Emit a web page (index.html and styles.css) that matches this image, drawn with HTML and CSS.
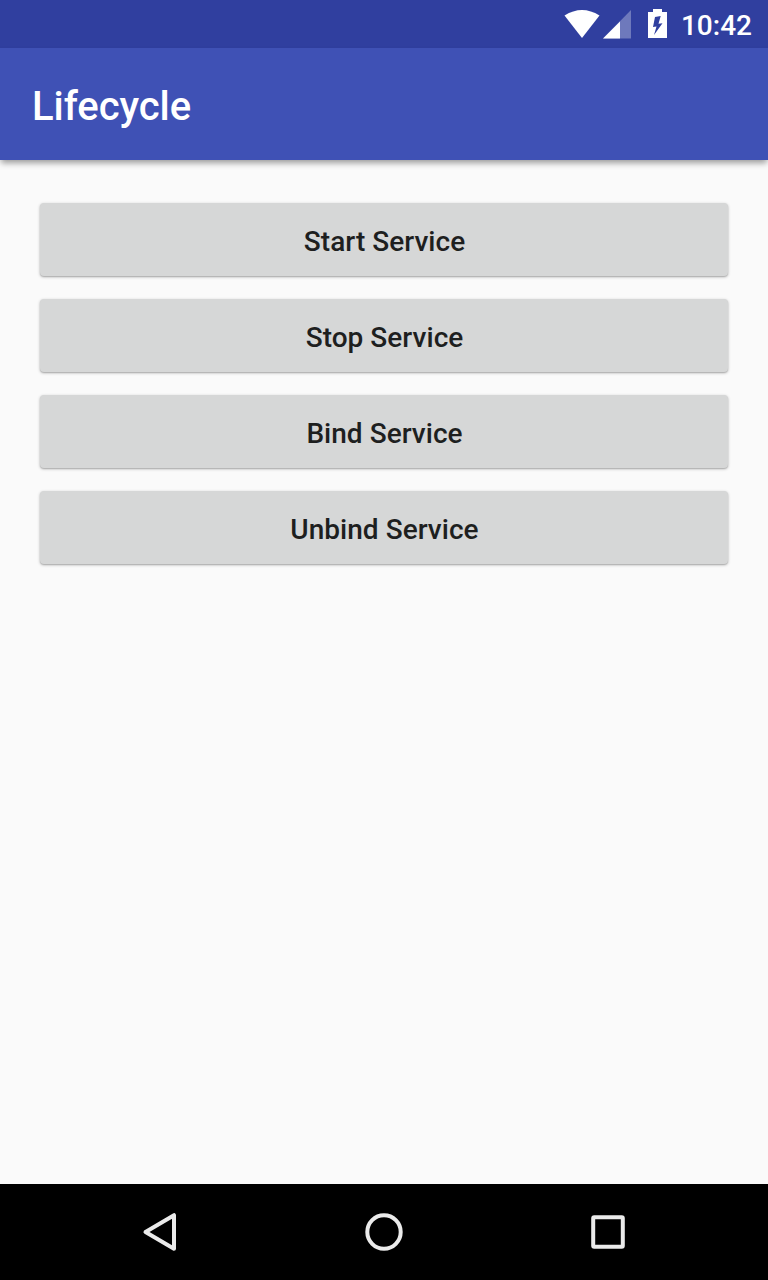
FILE: index.html
```html
<!DOCTYPE html>
<html lang="en">
<head>
<meta charset="utf-8">
<title>Lifecycle</title>
<link rel="stylesheet" href="styles.css">
</head>
<body>
<div class="screen">
  <div class="status-bar">
    <svg class="status-icons" viewBox="0 0 112 48" aria-hidden="true">
      <path d="M8.500 15.500Q26 4.500 43.500 15.500L26 38Z" fill="#fff"/>
      <path d="M75 10V38.500H47Z" fill="#fff" fill-opacity=".3"/>
      <path d="M64 21.500V38.500H47Z" fill="#fff"/>
      <path fill-rule="evenodd" d="M97 9h9v3h5v26H92V12h5ZM104.700 16L99 17L97 27L100.500 26.500L98 35L106.500 23.300L102.500 23.700Z" fill="#fff"/>
    </svg>
    <span class="clock">10:42</span>
  </div>
  <header class="app-bar"><h1 class="title">Lifecycle</h1></header>
  <main class="content">
    <button class="button">Start Service</button>
    <button class="button">Stop Service</button>
    <button class="button">Bind Service</button>
    <button class="button">Unbind Service</button>
  </main>
  <nav class="nav-bar">
    <svg class="nav-icon" viewBox="0 0 64 64"><path d="M46 15.200V48.800L17.500 32Z"/></svg>
    <svg class="nav-icon" viewBox="0 0 64 64"><circle cx="32" cy="32" r="16.700"/></svg>
    <svg class="nav-icon" viewBox="0 0 64 64"><rect x="17.200" y="17.200" width="29.600" height="29.600" rx="1"/></svg>
  </nav>
</div>
</body>
</html>
```
FILE: styles.css
```css
body { margin: 0; font-family: Roboto, sans-serif; }
.screen { display: flex; flex-direction: column; width: 768px; height: 1280px; background: #fafafa; }
.status-bar { display: flex; align-items: center; justify-content: flex-end; height: 48px; padding-right: 16px; background: #303f9f; color: #fff; }
.status-icons { width: 112px; height: 48px; margin-right: 13px; }
.clock { padding-top: 3px; font-size: 28px; font-weight: 500; line-height: 47px; }
.app-bar { display: flex; align-items: center; height: 112px; padding-left: 32px; background: #3f51b5; box-shadow: 0 4px 6px -1px rgba(0, 0, 0, .38); }
.title { margin: 0; padding-top: 5px; color: #fff; font-size: 40px; font-weight: 500; letter-spacing: -0.05px; }
.content { flex: 1; display: flex; flex-direction: column; gap: 23px; padding: 43px 40px 0; }
.button { height: 73px; padding: 4px 0 0 1px; border: 0; border-radius: 4px; background: #d6d7d7; color: #1e1f1f; font-family: inherit; font-size: 28px; font-weight: 500; letter-spacing: 0.03px; box-shadow: 0 1px 3px rgba(0, 0, 0, .3), 0 1px 1px rgba(0, 0, 0, .1); }
.nav-bar { display: flex; justify-content: space-between; align-items: center; height: 96px; padding: 0 128px; background: #000; }
.nav-icon { width: 64px; height: 64px; fill: none; stroke: #ebebeb; stroke-width: 4; stroke-linejoin: round; }
```
